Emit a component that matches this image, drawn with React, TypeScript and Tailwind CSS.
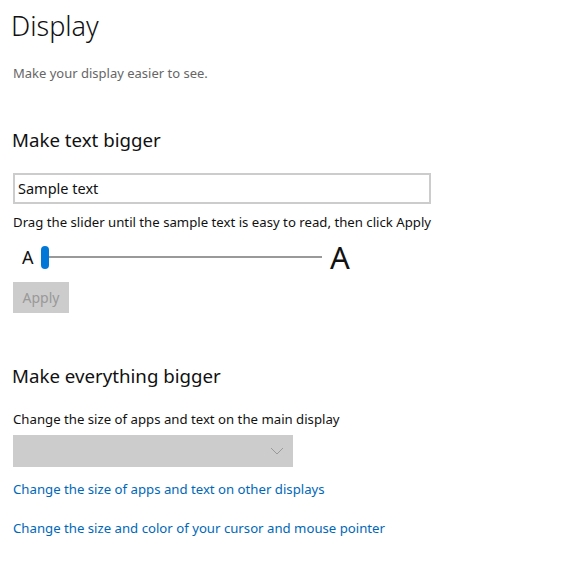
import React from "react";

export default function App() {
  return (
    <div
      className="w-[577px] h-[569px] bg-white text-black overflow-hidden"
      style={{ fontFamily: '"Noto Sans", "Open Sans", sans-serif' }}
    >
      <div className="pl-[13px] pt-[6px] flex flex-col">
        <h1 className="text-[27px] font-light leading-[40px] -ml-[2px] text-[#111]">Display</h1>
        <p className="mt-[17px] text-[13px] leading-[20px] text-[#666]">Make your display easier to see.</p>

        <h2 className="mt-[44px] text-[18.7px] leading-[26px] -ml-[1px] text-[#111]">Make text bigger</h2>
        <div className="mt-[20px] w-[418px] h-[31px] border-2 border-[#ccc] flex items-center pl-[3px] text-[14.5px] text-[#111]">
          Sample text
        </div>
        <p className="mt-[8px] text-[13.2px] leading-[20px] text-[#111] whitespace-nowrap">
          Drag the slider until the sample text is easy to read, then click Apply
        </p>
        <div className="mt-[9px] h-[32px] flex items-center">
          <span className="ml-[9px] w-[19px] text-[18px] leading-none text-[#111]">A</span>
          <div className="relative w-[281px] h-[24px] flex items-center">
            <div className="w-[8px] h-[23px] rounded-full bg-[#0078d7]" />
            <div className="flex-1 h-[2px] bg-[#999]" />
          </div>
          <span className="ml-[8px] text-[31px] leading-none text-[#111]">A</span>
        </div>
        <div className="mt-[9px] w-[56px] h-[31px] bg-[#cccccc] flex items-center justify-center text-[14px] text-[#999]">
          Apply
        </div>

        <h2 className="mt-[50px] text-[18.7px] leading-[26px] -ml-[1px] text-[#111]">Make everything bigger</h2>
        <p className="mt-[20px] text-[13.2px] leading-[20px] text-[#111] whitespace-nowrap">
          Change the size of apps and text on the main display
        </p>
        <div className="mt-[6px] w-[280px] h-[32px] bg-[#cccccc] flex items-center justify-end pr-[9px]">
          <svg width="14" height="8" viewBox="0 0 14 8" fill="none">
            <path d="M1 1L7 7L13 1" stroke="#999" strokeWidth="1" />
          </svg>
        </div>
        <a className="mt-[12px] text-[13.2px] leading-[20px] text-[#0067b8] whitespace-nowrap">
          Change the size of apps and text on other displays
        </a>
        <a className="mt-[19px] text-[13.2px] leading-[20px] text-[#0067b8] whitespace-nowrap">
          Change the size and color of your cursor and mouse pointer
        </a>
      </div>
    </div>
  );
}
